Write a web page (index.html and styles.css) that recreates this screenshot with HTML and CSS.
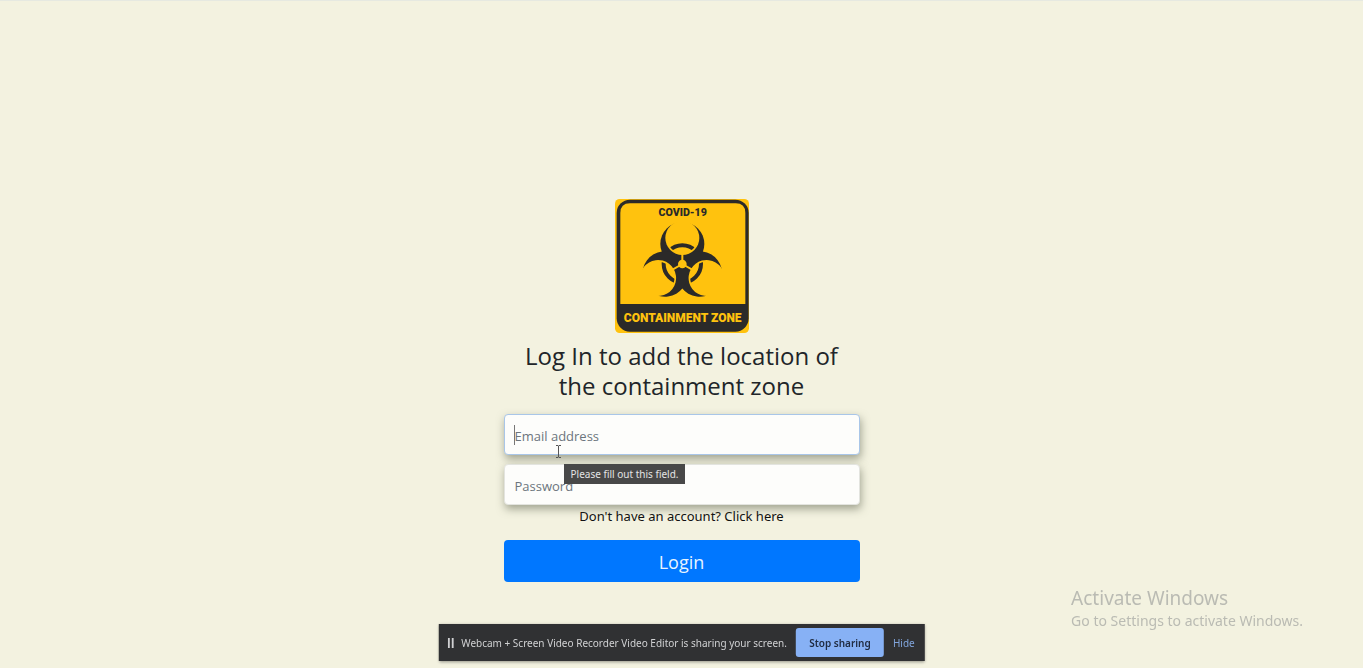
FILE: index.html
```html
<!DOCTYPE html>
<html lang="en">
<head>
<meta charset="utf-8">
<meta name="viewport" content="width=device-width, initial-scale=1">
<title>Log In</title>
<link rel="stylesheet" href="styles.css">
</head>
<body>
<main class="page">
  <form class="login">
    <svg class="logo" viewBox="0 0 402 402" role="img" aria-label="COVID-19 containment zone">
      <defs>
        <mask id="arms" maskUnits="userSpaceOnUse" x="-150" y="-150" width="300" height="300">
          <rect x="-150" y="-150" width="300" height="300" fill="#fff"/>
          <g fill="#000">
            <circle cy="-78" r="51"/>
            <circle cy="-84" r="54" transform="rotate(120)"/>
            <circle cy="-84" r="54" transform="rotate(240)"/>
            <circle r="13"/>
            <path d="M-3-40h6V0h-6z"/>
            <path d="M-3-40h6V0h-6z" transform="rotate(120)"/>
            <path d="M-3-40h6V0h-6z" transform="rotate(240)"/>
          </g>
        </mask>
        <clipPath id="gaps">
          <circle cy="-78" r="46"/>
          <circle cy="-84" r="49" transform="rotate(120)"/>
          <circle cy="-84" r="49" transform="rotate(240)"/>
        </clipPath>
      </defs>
      <rect width="402" height="402" rx="14" fill="#ffc20e"/>
      <rect x="5" y="2" width="396" height="396" rx="40" fill="#2b2a29"/>
      <path d="M16 315V42Q16 13 45 13H362Q391 13 391 42V315Z" fill="#ffc20e"/>
      <g transform="translate(202 195)" fill="#2b2a29">
        <g mask="url(#arms)">
          <circle cy="-60" r="66"/>
          <circle cy="-60" r="68" transform="rotate(120)"/>
          <circle cy="-60" r="68" transform="rotate(240)"/>
        </g>
        <g clip-path="url(#gaps)">
          <circle r="56" fill="none" stroke="#2b2a29" stroke-width="12"/>
        </g>
      </g>
      <text class="logo-top" x="203" y="52">COVID-19</text>
      <text class="logo-bottom" x="203" y="368">CONTAINMENT ZONE</text>
    </svg>
    <h1 class="title">Log In to add the location of the containment zone</h1>
    <div class="fields">
      <div class="field">
        <input class="input input-active" type="email" placeholder="Email address" aria-label="Email address" required>
        <span class="caret"></span>
        <svg class="pointer" viewBox="0 0 7 13" aria-hidden="true"><path d="M1 .5h2l.5.5.5-.5h2M3.500 1v11M1 12.500h2l.5-.5.5.5h2" fill="none" stroke="#555" stroke-width="1"/></svg>
        <span class="tooltip" role="tooltip">Please fill out this field.</span>
      </div>
      <div class="field">
        <input class="input" type="password" placeholder="Password" aria-label="Password" required>
      </div>
    </div>
    <a class="signup" href="#">Don't have an account? Click here</a>
    <button class="submit" type="submit">Login</button>
  </form>
</main>
<aside class="watermark">
  <p class="watermark-title">Activate Windows</p>
  <p class="watermark-text">Go to Settings to activate Windows.</p>
</aside>
<div class="share-bar">
  <svg class="pause" viewBox="0 0 6 10" aria-hidden="true"><path d="M0 0h2v10H0zM4 0h2v10H4z" fill="#d0d1d3"/></svg>
  <span class="share-text">Webcam + Screen Video Recorder Video Editor is sharing your screen.</span>
  <button class="stop" type="button">Stop sharing</button>
  <a class="hide" href="#">Hide</a>
</div>
</body>
</html>
```
FILE: styles.css
```css
* {
  box-sizing: border-box;
}

body {
  margin: 0;
  min-height: 100vh;
  background: #f3f2e0;
  border-top: 1px solid #e6e9e1;
  font-family: "Noto Sans", "Open Sans", sans-serif;
  color: #212529;
}

.page {
  display: flex;
  justify-content: center;
  padding: 198px 16px 80px;
}

.login {
  display: flex;
  flex-direction: column;
  align-items: center;
  width: 100%;
  max-width: 356px;
}

.logo {
  width: 134px;
  height: 134px;
}

.logo-top,
.logo-bottom {
  font-family: Roboto, "Liberation Sans", sans-serif;
  font-weight: 900;
  text-anchor: middle;
}

.logo-top {
  font-size: 32px;
  fill: #2b2a29;
}

.logo-bottom {
  font-size: 36px;
  fill: #ffc20e;
}

.title {
  margin: 8px 0 13px;
  padding: 0 12px;
  font-family: "Open Sans", sans-serif;
  font-size: 24px;
  font-weight: 400;
  line-height: 30px;
  text-align: center;
}

.fields {
  display: grid;
  gap: 9px;
  width: 100%;
}

.field {
  position: relative;
}

.input {
  display: block;
  width: 100%;
  height: 41px;
  padding: 3px 10px 0;
  border: 1px solid #e3e4df;
  border-radius: 4px;
  background: #fdfdfb;
  box-shadow: 1px 4px 8px rgba(80, 85, 65, 0.5);
  font: 13px "Open Sans", sans-serif;
  color: #495057;
}

.input::placeholder {
  color: #6c757d;
  opacity: 1;
}

.input-active {
  border-color: #a9c6e8;
}

.caret {
  position: absolute;
  left: 10px;
  top: 11px;
  width: 1px;
  height: 20px;
  background: #777;
}

.pointer {
  position: absolute;
  left: 51px;
  top: 31px;
  width: 7px;
  height: 13px;
}

.tooltip {
  position: absolute;
  z-index: 1;
  left: 60px;
  top: 50px;
  padding: 0 7px;
  background: #484848;
  color: #e4e4e4;
  font-size: 10px;
  line-height: 20px;
  white-space: nowrap;
}

.signup {
  margin: 2px 0 15px;
  color: #111;
  font-size: 13px;
  line-height: 18px;
  text-decoration: none;
}

.submit {
  width: 100%;
  height: 42px;
  padding: 2px 0 0;
  border: 0;
  border-radius: 4px;
  background: #0077ff;
  color: #e8f4ff;
  font: 18px "Open Sans", sans-serif;
}

.watermark {
  position: fixed;
  right: 60px;
  bottom: 36px;
  color: #babbb3;
}

.watermark p {
  margin: 0;
}

.watermark-title {
  font-size: 19px;
  line-height: 24px;
}

.watermark-text {
  font-size: 14px;
  line-height: 22px;
}

.share-bar {
  position: fixed;
  left: 50%;
  bottom: 7px;
  transform: translateX(-50%);
  display: flex;
  align-items: center;
  height: 37px;
  padding: 0 10px 0 9px;
  background: #303133;
  box-shadow: 0 1px 3px rgba(0, 0, 0, 0.4);
  color: #d0d1d3;
  font-size: 10px;
  white-space: nowrap;
}

.pause {
  width: 6px;
  height: 10px;
  margin-right: 8px;
}

.stop {
  width: 88px;
  height: 29px;
  margin: 0 9px;
  padding: 0;
  border: 0;
  border-radius: 3px;
  background: #87b1f5;
  color: #202c42;
  font: 600 10px "Noto Sans", sans-serif;
}

.hide {
  color: #81a5dc;
  text-decoration: none;
}
```
